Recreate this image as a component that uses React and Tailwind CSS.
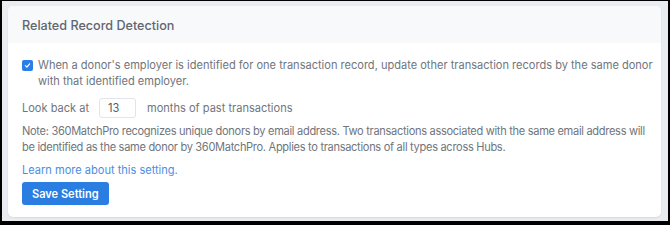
export default function App() {
  return (
    <div className="w-[670px] h-[225px] bg-black pt-[1px] pl-[2px] pr-[2px] pb-[4px]" style={{ fontFamily: "Inter, 'Noto Sans', sans-serif" }}>
      <div className="w-full h-full bg-[#e9ecf0] pt-[5px] pl-[6px] pr-[7px] pb-[3px]">
        <div className="h-[211px] bg-white rounded-[5px] shadow-[0_1px_2px_rgba(0,0,0,0.08)] overflow-hidden">
          <div className="h-[37px] bg-[#f8f9fb] flex items-center pl-[14px] pt-[3px] text-[12.6px] text-[#5f6670] font-medium">
            Related Record Detection
          </div>
          <div className="pl-[14px] pr-[4px] pt-[14px] text-[11.05px] leading-[16px] text-[#70757d] whitespace-nowrap">
            <div className="flex items-start gap-[5px]">
              <div className="mt-[3px] w-[11px] h-[11px] rounded-[2px] bg-[#2b7de9] flex items-center justify-center shrink-0">
                <svg width="7" height="7" viewBox="0 0 10 10"><path d="M2 5.2 L4.2 7.3 L8 2.8" stroke="white" strokeWidth="1.8" fill="none" strokeLinecap="round" strokeLinejoin="round"/></svg>
              </div>
              <div>When a donor's employer is identified for one transaction record, update other transaction records by the same donor<br />with that identified employer.</div>
            </div>
            <div className="flex items-center mt-[9px]">
              <span>Look back at</span>
              <div className="ml-[10px] w-[37px] h-[20px] border border-[#e1e4e8] rounded-[3px] flex items-center pl-[8px] text-[#555b63]">13</div>
              <span className="ml-[11px]">months of past transactions</span>
            </div>
            <div className="mt-[5px] tracking-[-0.3px]">Note: 360MatchPro recognizes unique donors by email address. Two transactions associated with the same email address will<br />be identified as the same donor by 360MatchPro. Applies to transactions of all types across Hubs.</div>
            <div className="mt-[7px] text-[#4a8ee3]">Learn more about this setting.</div>
            <button className="mt-[4px] h-[23px] px-[10px] bg-[#2a7de1] text-white rounded-[3px] text-[11.05px] font-semibold">Save Setting</button>
          </div>
        </div>
      </div>
    </div>
  );
}
